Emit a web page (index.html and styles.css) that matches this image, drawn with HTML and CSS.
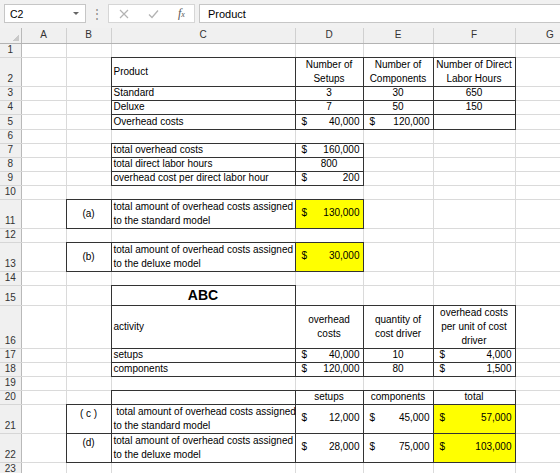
FILE: index.html
```html
<!DOCTYPE html>
<html lang="en">
<head>
    <meta charset="UTF-8">
    <meta name="viewport" content="width=device-width, initial-scale=1.0">
    <title>Overhead costs - ABC</title>
    <link rel="stylesheet" href="styles.css">
</head>
<body>

<div class="formula-bar">
    <div class="name-box">C2<span class="arrow"></span></div>
    <div class="grip">&#8942;</div>
    <div class="fx-buttons">
        <svg width="10" height="10" viewBox="0 0 10 10"><path d="M1 1L9 9M9 1L1 9" stroke="#b3b3b3" stroke-width="1.2" fill="none"/></svg>
        <svg width="11" height="10" viewBox="0 0 11 10"><path d="M1 5.5L4 8.5L10 1.5" stroke="#b3b3b3" stroke-width="1.3" fill="none"/></svg>
        <span class="fx"><i>f</i><small>x</small></span>
    </div>
    <div class="formula-input">Product</div>
</div>

<table class="sheet">
    <colgroup>
        <col class="c-num"><col class="c-a"><col class="c-b"><col class="c-c"><col class="c-d"><col class="c-e"><col class="c-f"><col class="c-g">
    </colgroup>
    <tr class="col-heads">
        <th class="corner"></th><th>A</th><th>B</th><th>C</th><th>D</th><th>E</th><th>F</th><th>G</th>
    </tr>
    <tr><th>1</th><td></td><td></td><td></td><td></td><td></td><td></td><td></td></tr>
    <tr class="h29">
        <th>2</th><td></td><td></td>
        <td class="box mid">Product</td>
        <td class="box mid center">Number of<br>Setups</td>
        <td class="box mid center">Number of<br>Components</td>
        <td class="box mid center">Number of Direct<br>Labor Hours</td>
        <td></td>
    </tr>
    <tr><th>3</th><td></td><td></td><td class="box">Standard</td><td class="box center">3</td><td class="box center">30</td><td class="box center">650</td><td></td></tr>
    <tr><th>4</th><td></td><td></td><td class="box">Deluxe</td><td class="box center">7</td><td class="box center">50</td><td class="box center">150</td><td></td></tr>
    <tr class="h15"><th>5</th><td></td><td></td><td class="box">Overhead costs</td><td class="box acct"><span>$</span>40,000</td><td class="box acct"><span>$</span>120,000</td><td class="box"></td><td></td></tr>
    <tr><th>6</th><td></td><td></td><td></td><td></td><td></td><td></td><td></td></tr>
    <tr><th>7</th><td></td><td></td><td class="box">total overhead costs</td><td class="box acct"><span>$</span>160,000</td><td></td><td></td><td></td></tr>
    <tr><th>8</th><td></td><td></td><td class="box">total direct labor hours</td><td class="box center">800</td><td></td><td></td><td></td></tr>
    <tr><th>9</th><td></td><td></td><td class="box">overhead cost per direct labor hour</td><td class="box acct"><span>$</span>200</td><td></td><td></td><td></td></tr>
    <tr><th>10</th><td></td><td></td><td></td><td></td><td></td><td></td><td></td></tr>
    <tr class="h28">
        <th>11</th><td></td>
        <td class="box mid center">(a)</td>
        <td class="box mid">total amount of overhead costs assigned<br>to the standard model</td>
        <td class="box mid acct hl"><span>$</span>130,000</td>
        <td></td><td></td><td></td>
    </tr>
    <tr><th>12</th><td></td><td></td><td></td><td></td><td></td><td></td><td></td></tr>
    <tr class="h28">
        <th>13</th><td></td>
        <td class="box mid center">(b)</td>
        <td class="box mid">total amount of overhead costs assigned<br>to the deluxe model</td>
        <td class="box mid acct hl"><span>$</span>30,000</td>
        <td></td><td></td><td></td>
    </tr>
    <tr><th>14</th><td></td><td></td><td></td><td></td><td></td><td></td><td></td></tr>
    <tr class="h20"><th>15</th><td></td><td></td><td class="box title">ABC</td><td></td><td></td><td></td><td></td></tr>
    <tr class="h43">
        <th>16</th><td></td><td></td>
        <td class="box mid">activity</td>
        <td class="box mid center">overhead<br>costs</td>
        <td class="box mid center">quantity of<br>cost driver</td>
        <td class="box mid center">overhead costs<br>per unit of cost<br>driver</td>
        <td></td>
    </tr>
    <tr><th>17</th><td></td><td></td><td class="box">setups</td><td class="box acct"><span>$</span>40,000</td><td class="box center">10</td><td class="box acct"><span>$</span>4,000</td><td></td></tr>
    <tr><th>18</th><td></td><td></td><td class="box">components</td><td class="box acct"><span>$</span>120,000</td><td class="box center">80</td><td class="box acct"><span>$</span>1,500</td><td></td></tr>
    <tr><th>19</th><td></td><td></td><td></td><td></td><td></td><td></td><td></td></tr>
    <tr><th>20</th><td></td><td></td><td class="box"></td><td class="box center">setups</td><td class="box center">components</td><td class="box center">total</td><td></td></tr>
    <tr class="h28">
        <th>21</th><td></td>
        <td class="box top center">( c )</td>
        <td class="box mid">&nbsp;total amount of overhead costs assigned<br>to the standard model</td>
        <td class="box mid acct"><span>$</span>12,000</td>
        <td class="box mid acct"><span>$</span>45,000</td>
        <td class="box mid acct hl"><span>$</span>57,000</td>
        <td></td>
    </tr>
    <tr class="h28">
        <th>22</th><td></td>
        <td class="box top center">(d)</td>
        <td class="box mid">total amount of overhead costs assigned<br>to the deluxe model</td>
        <td class="box mid acct"><span>$</span>28,000</td>
        <td class="box mid acct"><span>$</span>75,000</td>
        <td class="box mid acct hl"><span>$</span>103,000</td>
        <td></td>
    </tr>
    <tr><th>23</th><td></td><td></td><td></td><td></td><td></td><td></td><td></td></tr>
</table>

</body>
</html>
```

FILE: styles.css
```css
body {
    margin: 0;
    width: 560px;
    height: 473px;
    overflow: hidden;
    font-family: "Liberation Sans", Arial, sans-serif;
    font-size: 10px;
    color: #000;
    background-color: #fff;
}

/* formula bar */
.formula-bar {
    display: flex;
    align-items: center;
    height: 28px;
    box-sizing: border-box;
    padding: 4px 0 5px 4px;
    background-color: #f1f1f1;
}

.name-box {
    display: flex;
    align-items: center;
    justify-content: space-between;
    width: 82px;
    height: 19px;
    box-sizing: border-box;
    padding: 0 6px 0 5px;
    background-color: #fff;
    border: 1px solid #c6c6c6;
    font-size: 10.5px;
}

.arrow {
    width: 0;
    height: 0;
    border-left: 3px solid transparent;
    border-right: 3px solid transparent;
    border-top: 3px solid #666;
}

.grip {
    width: 22px;
    text-align: center;
    color: #888;
    font-size: 12px;
}

.fx-buttons {
    display: flex;
    align-items: center;
    gap: 19px;
    width: 87px;
    height: 19px;
    box-sizing: border-box;
    padding-left: 10px;
    background-color: #fff;
    border: 1px solid #d6d6d6;
}

.fx {
    font-family: "Liberation Serif", serif;
    font-size: 12px;
    color: #555;
}

.fx small {
    font-size: 8px;
    font-style: italic;
}

.formula-input {
    flex: 1;
    height: 19px;
    box-sizing: border-box;
    margin-left: 4px;
    padding: 3px 0 0 8px;
    background-color: #fff;
    border: 1px solid #c6c6c6;
    border-right: none;
    font-size: 11px;
}

/* grid */
.sheet {
    border-collapse: collapse;
    table-layout: fixed;
    width: 585px;
}

.c-num { width: 21px; }
.c-a { width: 45px; }
.c-b { width: 45px; }
.c-c { width: 184px; }
.c-d { width: 68px; }
.c-e { width: 70px; }
.c-f { width: 82px; }
.c-g { width: 70px; }

col {
    border-right: 1px solid #dadada;
}

tr {
    height: 14px;
    border-bottom: 1px solid #dadada;
}

tr.h15 { height: 15px; }
tr.h20 { height: 20px; }
tr.h28 { height: 28px; }
tr.h29 { height: 29px; }
tr.h43 { height: 43px; }

th {
    padding: 0 0 1px;
    font-weight: normal;
    color: #333;
    background-color: #f0f0f0;
    border-right: 1px solid #b9b9b9;
    border-bottom: 1px solid #d6d6d6;
    vertical-align: bottom;
    line-height: 12px;
}

.col-heads {
    height: 15px;
}

.col-heads th {
    padding: 0;
    vertical-align: middle;
    border-right: 1px solid #d0d0d0;
    border-bottom: 1px solid #b3b3b3;
}

.col-heads th.corner {
    border-right: 1px solid #b9b9b9;
    background: #f0f0f0 linear-gradient(to top left, #c9c9c9 50%, transparent 50%) no-repeat right 2px bottom 2px / 7px 7px;
}

td {
    padding: 0 2px 1px;
    line-height: 12px;
    vertical-align: bottom;
    white-space: nowrap;
}

td.box {
    border: 1px solid #333;
}

td.mid {
    vertical-align: middle;
    line-height: 14px;
    padding-bottom: 0;
}

td.top {
    vertical-align: top;
    padding-top: 3px;
}

td.center {
    text-align: center;
}

td.acct {
    text-align: right;
    padding: 0 3px 1px 6px;
}

td.acct span {
    float: left;
}

td.hl {
    background-color: #ffff00;
}

td.title {
    text-align: center;
    font-weight: bold;
    font-size: 14px;
    vertical-align: middle;
}
```
